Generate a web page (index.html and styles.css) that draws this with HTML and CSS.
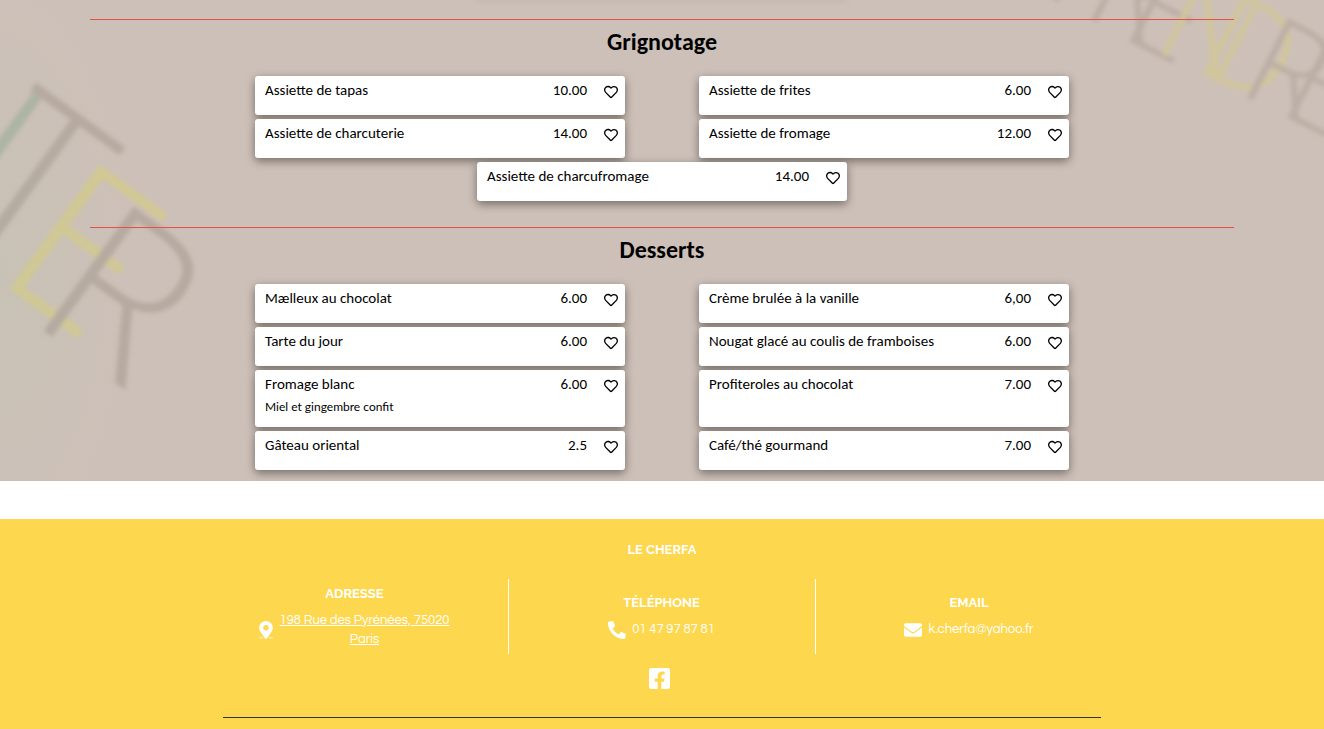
FILE: index.html
```html
<!DOCTYPE html>
<html lang="fr">
<head>
  <meta charset="UTF-8">
  <meta name="viewport" content="width=device-width, initial-scale=1">
  <title>Le Cherfa - Carte</title>
  <link rel="stylesheet" href="styles.css">
</head>
<body>
  <svg class="sprite" aria-hidden="true">
    <symbol id="coeur" viewBox="0 0 512 512">
      <path d="M458.400 64.300C400.600 15.700 311.300 23 256 79.300 200.700 23 111.400 15.600 53.600 64.300-21.600 127.600-10.600 230.800 43 285.500l175.400 178.700c10 10.200 23.400 15.900 37.600 15.900 14.300 0 27.600-5.600 37.600-15.800L469 285.600c53.500-54.700 64.700-157.900-10.600-221.300zm-23.600 187.500L259.400 430.500c-2.400 2.400-4.400 2.400-6.800 0L77.200 251.800c-36.500-37.200-43.900-107.600 7.300-150.700 38.900-32.700 98.900-27.800 136.500 10.500l35 35.700 35-35.700c37.800-38.500 97.800-43.200 136.500-10.600 51.100 43.100 43.500 113.900 7.300 150.800z"/>
    </symbol>
  </svg>

  <main class="carte">
    <svg class="fresque" aria-hidden="true">
      <g class="traits">
        <text class="vert" transform="translate(-157 143) rotate(36)">U</text>
        <text class="gris" transform="translate(-55 206) rotate(36)">T</text>
        <text class="jaune" transform="translate(-8 276) rotate(36)">E</text>
        <text class="gris" transform="translate(26 318) rotate(36)">R</text>
      </g>
      <svg x="100%" overflow="visible">
        <g class="traits petit">
          <text class="gris" transform="translate(-282 -6) rotate(27)">P</text>
          <text class="gris" transform="translate(-244 14) rotate(27)">R</text>
          <text class="gris" transform="translate(-206 36) rotate(27)">E</text>
          <text class="jaune" transform="translate(-174 48) rotate(27)">N</text>
          <text class="jaune" transform="translate(-132 68) rotate(27)">D</text>
          <text class="gris" transform="translate(-88 92) rotate(27)">R</text>
          <text class="gris" transform="translate(-48 112) rotate(27)">E</text>
        </g>
      </svg>
    </svg>

    <div class="produit-fin"></div>

    <section class="rubrique">
      <h2>Grignotage</h2>
      <div class="produits">
        <article class="produit"><h3>Assiette de tapas</h3><span class="prix">10.00</span><button class="favori" aria-label="Ajouter aux favoris"><svg><use href="#coeur"/></svg></button></article>
        <article class="produit"><h3>Assiette de frites</h3><span class="prix">6.00</span><button class="favori" aria-label="Ajouter aux favoris"><svg><use href="#coeur"/></svg></button></article>
        <article class="produit"><h3>Assiette de charcuterie</h3><span class="prix">14.00</span><button class="favori" aria-label="Ajouter aux favoris"><svg><use href="#coeur"/></svg></button></article>
        <article class="produit"><h3>Assiette de fromage</h3><span class="prix">12.00</span><button class="favori" aria-label="Ajouter aux favoris"><svg><use href="#coeur"/></svg></button></article>
        <article class="produit"><h3>Assiette de charcufromage</h3><span class="prix">14.00</span><button class="favori" aria-label="Ajouter aux favoris"><svg><use href="#coeur"/></svg></button></article>
      </div>
    </section>

    <section class="rubrique">
      <h2>Desserts</h2>
      <div class="produits">
        <article class="produit"><h3>Mælleux au chocolat</h3><span class="prix">6.00</span><button class="favori" aria-label="Ajouter aux favoris"><svg><use href="#coeur"/></svg></button></article>
        <article class="produit"><h3>Crème brulée à la vanille</h3><span class="prix">6,00</span><button class="favori" aria-label="Ajouter aux favoris"><svg><use href="#coeur"/></svg></button></article>
        <article class="produit"><h3>Tarte du jour</h3><span class="prix">6.00</span><button class="favori" aria-label="Ajouter aux favoris"><svg><use href="#coeur"/></svg></button></article>
        <article class="produit"><h3>Nougat glacé au coulis de framboises</h3><span class="prix">6.00</span><button class="favori" aria-label="Ajouter aux favoris"><svg><use href="#coeur"/></svg></button></article>
        <article class="produit"><h3>Fromage blanc</h3><span class="prix">6.00</span><button class="favori" aria-label="Ajouter aux favoris"><svg><use href="#coeur"/></svg></button><p>Miel et gingembre confit</p></article>
        <article class="produit"><h3>Profiteroles au chocolat</h3><span class="prix">7.00</span><button class="favori" aria-label="Ajouter aux favoris"><svg><use href="#coeur"/></svg></button></article>
        <article class="produit"><h3>Gâteau oriental</h3><span class="prix">2.5</span><button class="favori" aria-label="Ajouter aux favoris"><svg><use href="#coeur"/></svg></button></article>
        <article class="produit"><h3>Café/thé gourmand</h3><span class="prix">7.00</span><button class="favori" aria-label="Ajouter aux favoris"><svg><use href="#coeur"/></svg></button></article>
      </div>
    </section>
  </main>

  <footer>
    <h4>LE CHERFA</h4>
    <div class="contacts">
      <div class="contact">
        <h4>ADRESSE</h4>
        <a class="adresse" href="#">
          <svg class="icone-lieu" viewBox="0 0 384 512"><path d="M172.268 501.670C26.970 291.031 0 269.413 0 192 0 85.961 85.961 0 192 0s192 85.961 192 192c0 77.413-26.970 99.031-172.268 309.670-9.535 13.774-29.930 13.773-39.464 0zM192 272c44.183 0 80-35.817 80-80s-35.817-80-80-80-80 35.817-80 80 35.817 80 80 80zM0 468h110v26H0zM274 468h110v26H274z"/></svg>
          <span>198 Rue des Pyrénées, 75020 Paris</span>
        </a>
      </div>
      <div class="contact">
        <h4>TÉLÉPHONE</h4>
        <a href="tel:0147978781">
          <svg class="icone" viewBox="0 0 512 512"><path d="M493.400 24.600l-104-24c-11.300-2.600-22.900 3.300-27.500 13.900l-48 112c-4.200 9.800-1.400 21.300 6.900 28l60.600 49.600c-36 76.700-98.900 140.500-177.200 177.200l-49.600-60.600c-6.800-8.300-18.200-11.100-28-6.900l-112 48C3.900 366.500-2 378.100.6 389.400l24 104C27.100 504.200 36.700 512 48 512c256.100 0 464-207.500 464-464 0-11.200-7.700-20.900-18.600-23.400z" transform="matrix(-1 0 0 1 512 0)"/></svg>
          <span>01 47 97 87 81</span>
        </a>
      </div>
      <div class="contact">
        <h4>EMAIL</h4>
        <a href="mailto:k.cherfa@yahoo.fr">
          <svg class="icone" viewBox="0 0 512 512"><path d="M502.300 190.800c3.900-3.100 9.700-.2 9.700 4.700V400c0 26.500-21.500 48-48 48H48c-26.500 0-48-21.500-48-48V195.600c0-5 5.700-7.800 9.700-4.700 22.400 17.400 52.100 39.500 154.100 113.600 21.100 15.400 56.700 47.800 92.200 47.600 35.700.3 72-32.800 92.300-47.600 102-74.100 131.600-96.300 154-113.700zM256 320c23.200.4 56.600-29.200 73.400-41.400 132.700-96.300 142.800-104.700 173.400-128.700 5.800-4.500 9.200-11.500 9.200-18.900v-19c0-26.500-21.500-48-48-48H48c-26.500 0-48 21.500-48 48v19c0 7.400 3.400 14.300 9.200 18.900 30.600 23.900 40.700 32.400 173.400 128.700 16.800 12.200 50.200 41.800 73.400 41.400z"/></svg>
          <span>k.cherfa@yahoo.fr</span>
        </a>
      </div>
    </div>
    <a class="facebook" href="#" aria-label="Facebook">
      <svg viewBox="0 32 448 448"><path d="M400 32H48A48 48 0 0 0 0 80v352a48 48 0 0 0 48 48h137.250V327.690h-63V256h63v-54.640c0-62.150 37-96.480 93.670-96.480 27.140 0 55.520 4.840 55.520 4.840v61h-31.270c-30.810 0-40.420 19.120-40.420 38.730V256h68.780l-11 71.690h-57.780V480H400a48 48 0 0 0 48-48V80a48 48 0 0 0-48-48z"/></svg>
    </a>
    <hr>
  </footer>
</body>
</html>
```
FILE: styles.css
```css
* {
  box-sizing: border-box;
}
body {
  margin: 0;
  font-family: Carlito, Lato, sans-serif;
  color: #000;
}
h2, h3, h4, p {
  margin: 0;
}
.sprite {
  display: none;
}

/* carte */
.carte {
  position: relative;
  overflow: hidden;
  padding-bottom: 11px;
  background: radial-gradient(ellipse 130px 290px at 0 270px, #c8c2b6, #cdc0b8);
}
.fresque {
  position: absolute;
  top: 0;
  left: 0;
  width: 100%;
  height: 100%;
}
.traits {
  font-family: "Open Sans", sans-serif;
  font-size: 215px;
  font-weight: 300;
  opacity: 0.5;
  filter: blur(2px);
}
.petit {
  font-size: 125px;
  opacity: 0.4;
}
.gris {
  fill: #a1958a;
}
.jaune {
  fill: #d6d070;
}
.vert {
  fill: #8fa88e;
}
.produit-fin {
  position: relative;
  width: 370px;
  height: 1px;
  margin: -2px auto 0;
  box-shadow: 0 0 6px rgba(0, 0, 0, 0.3);
}
.rubrique {
  position: relative;
  max-width: 1144px;
  margin: 20px auto 0;
  border-top: 1px solid #e2543f;
}
.rubrique + .rubrique {
  margin-top: 26px;
}
.rubrique h2 {
  padding: 7px 0 19px;
  font-size: 24px;
  line-height: 30px;
  text-align: center;
}
.produits {
  display: flex;
  flex-wrap: wrap;
  justify-content: center;
  gap: 4px 74px;
  max-width: 814px;
  margin: 0 auto;
}
.produit {
  display: grid;
  grid-template-columns: 1fr auto 14px;
  column-gap: 17px;
  align-content: start;
  width: calc(50% - 37px);
  min-width: 280px;
  min-height: 39px;
  padding: 5px 7px 10px 10px;
  background: #fff;
  border-radius: 3px;
  box-shadow: 0 3px 10px rgba(0, 0, 0, 0.45);
}
.produit h3, .prix {
  font-size: 15px;
  font-weight: normal;
  line-height: 18px;
}
.produit p {
  grid-column: 1 / -1;
  padding-top: 2px;
  font-family: Lato, sans-serif;
  font-size: 12px;
  line-height: 20px;
}
.favori {
  display: flex;
  align-items: center;
  height: 22px;
  margin-bottom: -2px;
  padding: 0;
  border: none;
  background: none;
  cursor: pointer;
}
.favori svg {
  width: 14px;
  height: 14px;
}

/* pied de page */
footer {
  display: flex;
  flex-direction: column;
  align-items: center;
  margin-top: 38px;
  padding: 21px 20px 12px;
  background: #fdd74d;
  color: #fff;
  font-family: Raleway, Lato, sans-serif;
  font-size: 13px;
  font-variant-numeric: lining-nums;
}
footer h4 {
  font-size: 13px;
  line-height: 19px;
}
.contacts {
  display: grid;
  grid-template-columns: repeat(3, 1fr);
  width: 100%;
  max-width: 921px;
  margin: 20px 0 14px;
}
.contact {
  display: flex;
  flex-direction: column;
  align-items: center;
  justify-content: center;
  gap: 8px;
  min-height: 75px;
  padding-bottom: 1px;
  line-height: 19px;
  text-align: center;
}
.contact:not(:last-child) {
  border-right: 1px solid #fff;
}
.contact a {
  display: flex;
  align-items: center;
  color: #fff;
  font-family: Questrial, Raleway, Lato, sans-serif;
  text-decoration: none;
}
.contact .adresse {
  max-width: 192px;
  text-decoration: underline;
}
footer svg {
  flex: none;
  margin-right: 6px;
  fill: #fff;
}
.icone {
  width: 18px;
  height: 18px;
}
.icone-lieu {
  width: 14px;
  height: 18px;
}
.facebook svg {
  display: block;
  width: 21px;
  height: 21px;
}
footer hr {
  width: 100%;
  max-width: 878px;
  margin: 28px 0 0;
  border: none;
  border-top: 1px solid #333;
}
```
